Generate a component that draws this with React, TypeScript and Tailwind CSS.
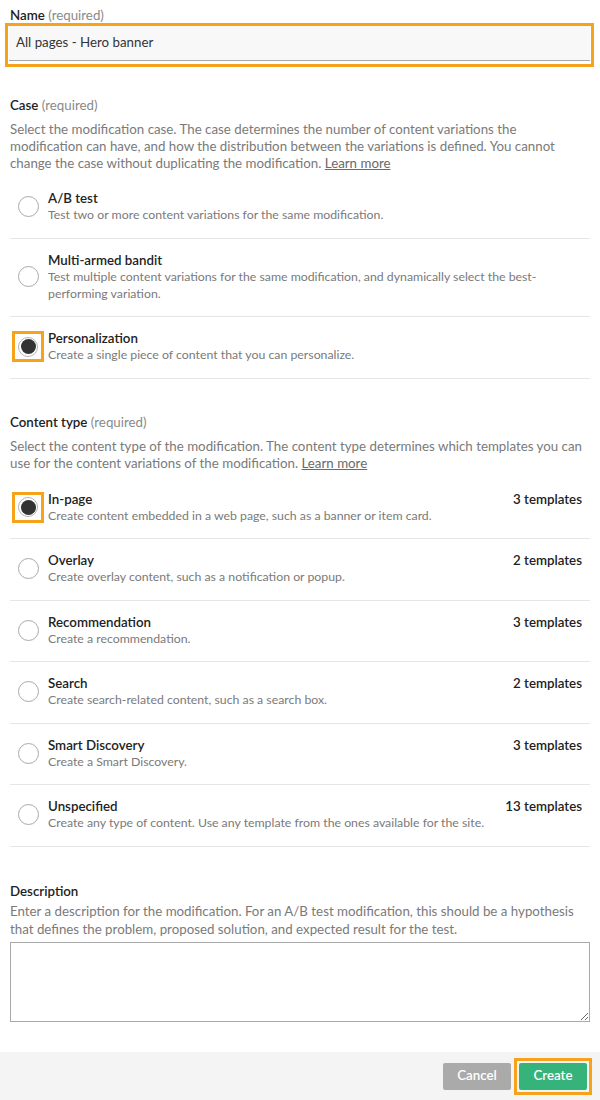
import React from "react";

const font = { fontFamily: "Lato, 'Noto Sans', 'Liberation Sans', sans-serif" };

function Radio({ selected }: { selected: boolean }) {
  if (selected) {
    return (
      <div className="w-[32px] h-[31px] border-[3px] border-[#f7a21b] flex items-center justify-center shrink-0">
        <div className="w-[20px] h-[20px] rounded-full border border-[#b5b5b5] bg-white flex items-center justify-center">
          <div className="w-[15px] h-[15px] rounded-full bg-[#333333]" />
        </div>
      </div>
    );
  }
  return (
    <div className="w-[32px] h-[31px] flex items-center justify-center shrink-0">
      <div className="w-[21px] h-[21px] rounded-full border border-[#a9a9a9] bg-white" />
    </div>
  );
}

function Option({
  title,
  desc,
  selected = false,
  templates,
}: {
  title: string;
  desc: React.ReactNode;
  selected?: boolean;
  templates?: string;
}) {
  return (
    <div className="flex items-center pt-[13px] pb-[14.5px] pl-[2px] pr-[8px] border-b border-[#e6e6e6]">
      <Radio selected={selected} />
      <div className="ml-[4px] flex-1">
        <div className="flex justify-between items-center text-[13.3px] leading-[16px] font-semibold text-[#222222]">
          <span>{title}</span>
          {templates && <span>{templates}</span>}
        </div>
        <div className="text-[12.3px] leading-[17px] text-[#7a7a7a] whitespace-nowrap">{desc}</div>
      </div>
    </div>
  );
}

export default function App() {
  return (
    <div className="w-[600px] h-[1100px] bg-white flex flex-col overflow-hidden" style={font}>
      <div className="flex-1 px-[10px]">
        {/* Name */}
        <div className="pt-[7px] text-[13.3px] leading-[16px] text-[#222222]">
          <span className="font-semibold">Name</span>{" "}
          <span className="text-[#8a8a8a]">(required)</span>
        </div>
        <div className="-ml-[5px] -mr-[4px] h-[44px] border-[3px] border-[#f7a21b] px-[1px]">
          <div className="h-[35px] bg-[#f8f8f8] border-b border-[#a8a8a8] flex items-center pl-[7px] text-[13.3px] text-[#333333]">
            All pages - Hero banner
          </div>
        </div>

        {/* Case */}
        <div className="mt-[30px] text-[13.3px] leading-[17px] text-[#222222]">
          <span className="font-semibold">Case</span>{" "}
          <span className="text-[#8a8a8a]">(required)</span>
        </div>
        <div className="mt-[7px] text-[13.3px] leading-[17px] text-[#7a7a7a] whitespace-nowrap">
          Select the modification case. The case determines the number of content variations the
          <br />
          modification can have, and how the distribution between the variations is defined. You cannot
          <br />
          change the case without duplicating the modification.{" "}
          <span className="underline text-[#6a6a6a]">Learn more</span>
        </div>
        <div className="mt-[5px]">
          <Option title="A/B test" desc="Test two or more content variations for the same modification." />
          <Option
            title="Multi-armed bandit"
            desc={
              <>
                Test multiple content variations for the same modification, and dynamically select the best-
                <br />
                performing variation.
              </>
            }
          />
          <Option
            title="Personalization"
            selected
            desc="Create a single piece of content that you can personalize."
          />
        </div>

        {/* Content type */}
        <div className="mt-[35px] text-[13.3px] leading-[17px] text-[#222222]">
          <span className="font-semibold">Content type</span>{" "}
          <span className="text-[#8a8a8a]">(required)</span>
        </div>
        <div className="mt-[7px] text-[13.3px] leading-[17px] text-[#7a7a7a] whitespace-nowrap">
          Select the content type of the modification. The content type determines which templates you can
          <br />
          use for the content variations of the modification.{" "}
          <span className="underline text-[#6a6a6a]">Learn more</span>
        </div>
        <div className="mt-[6px]">
          <Option
            title="In-page"
            selected
            templates="3 templates"
            desc="Create content embedded in a web page, such as a banner or item card."
          />
          <Option
            title="Overlay"
            templates="2 templates"
            desc="Create overlay content, such as a notification or popup."
          />
          <Option title="Recommendation" templates="3 templates" desc="Create a recommendation." />
          <Option
            title="Search"
            templates="2 templates"
            desc="Create search-related content, such as a search box."
          />
          <Option title="Smart Discovery" templates="3 templates" desc="Create a Smart Discovery." />
          <Option
            title="Unspecified"
            templates="13 templates"
            desc="Create any type of content. Use any template from the ones available for the site."
          />
        </div>

        {/* Description */}
        <div className="mt-[36px] text-[13.3px] leading-[17px] text-[#222222] font-semibold">Description</div>
        <div className="mt-[2px] text-[13.3px] leading-[18px] text-[#7a7a7a] whitespace-nowrap">
          Enter a description for the modification. For an A/B test modification, this should be a hypothesis
          <br />
          that defines the problem, proposed solution, and expected result for the test.
        </div>
        <textarea
          className="mt-[4px] block w-full h-[80px] border border-[#a9a9a9] bg-white resize-y outline-none"
          aria-label="Description"
        />
      </div>

      {/* Footer */}
      <div className="h-[48px] bg-[#f4f4f4] flex items-center justify-end pr-[8px] gap-[3px]">
        <button className="w-[68px] h-[27px] rounded-[2px] bg-[#aaaaaa] text-white text-[13.3px] font-semibold">
          Cancel
        </button>
        <div className="border-[3px] border-[#f7a21b] p-[2px]">
          <button className="block w-[68px] h-[27px] rounded-[2px] bg-[#36b37a] text-white text-[13.3px] font-semibold">
            Create
          </button>
        </div>
      </div>
    </div>
  );
}
